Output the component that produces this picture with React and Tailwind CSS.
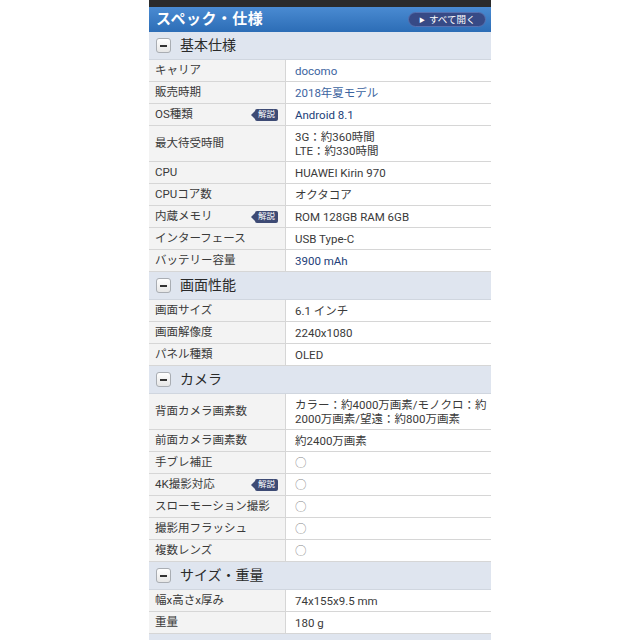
const sections = [
  {
    title: '基本仕様',
    rows: [
      { label: 'キャリア', value: 'docomo', tone: 'link' },
      { label: '販売時期', value: '2018年夏モデル', tone: 'link' },
      { label: 'OS種類', value: 'Android 8.1', tone: 'navy', badge: true },
      { label: '最大待受時間', value: ['3G：約360時間', 'LTE：約330時間'] },
      { label: 'CPU', value: 'HUAWEI Kirin 970' },
      { label: 'CPUコア数', value: 'オクタコア' },
      { label: '内蔵メモリ', value: 'ROM 128GB RAM 6GB', badge: true },
      { label: 'インターフェース', value: 'USB Type-C' },
      { label: 'バッテリー容量', value: '3900 mAh', tone: 'navy' },
    ],
  },
  {
    title: '画面性能',
    rows: [
      { label: '画面サイズ', value: '6.1 インチ' },
      { label: '画面解像度', value: '2240x1080' },
      { label: 'パネル種類', value: 'OLED' },
    ],
  },
  {
    title: 'カメラ',
    rows: [
      { label: '背面カメラ画素数', value: ['カラー：約4000万画素/モノクロ：約', '2000万画素/望遠：約800万画素'] },
      { label: '前面カメラ画素数', value: '約2400万画素' },
      { label: '手ブレ補正', value: '○', tone: 'mark' },
      { label: '4K撮影対応', value: '○', tone: 'mark', badge: true },
      { label: 'スローモーション撮影', value: '○', tone: 'mark' },
      { label: '撮影用フラッシュ', value: '○', tone: 'mark' },
      { label: '複数レンズ', value: '○', tone: 'mark' },
    ],
  },
  {
    title: 'サイズ・重量',
    rows: [
      { label: '幅x高さx厚み', value: '74x155x9.5 mm' },
      { label: '重量', value: '180 g' },
    ],
  },
];

const valueClass = (tone) => {
  switch (tone) {
    case 'link':
      return 'text-[#3c64a0]';
    case 'navy':
      return 'text-[#223e78]';
    case 'mark':
      return 'text-[#888]';
    default:
      return 'text-[#3a3a3a]';
  }
};

const Badge = () => (
  <span className="relative flex items-center h-[12px] px-[3px] ml-auto mr-[7px] rounded-[2px] bg-[#3d4a74] text-white text-[8.5px] leading-none">
    <span className="absolute left-[-4px] top-[2px] w-0 h-0 border-y-[4px] border-y-transparent border-r-[4px] border-r-[#3d4a74]"></span>
    解説
  </span>
);

const MinusIcon = () => (
  <span className="flex items-center justify-center w-[15px] h-[15px] rounded-[3px] border border-[#a9adb3] bg-gradient-to-b from-white to-[#e6e6e6]">
    <span className="block w-[7px] h-[2px] bg-[#333]"></span>
  </span>
);

const SpecRow = ({ row }) => {
  const multi = Array.isArray(row.value);
  return (
    <div className={`flex border-b border-[#d6d6d6] ${multi ? 'h-[36px]' : 'h-[22px]'}`}>
      <div className="flex items-center w-[137px] pl-[6px] bg-[#f3f3f3] border-r border-[#d6d6d6] text-[11.5px] text-[#3a3a3a]">
        <span>{row.label}</span>
        {row.badge && <Badge />}
      </div>
      <div className={`flex-1 flex flex-col justify-center pl-[9px] text-[11.5px] leading-[14px] bg-white ${valueClass(row.tone)}`}>
        {multi ? row.value.map((v) => <span key={v}>{v}</span>) : <span>{row.value}</span>}
      </div>
    </div>
  );
};

const App = () => {
  return (
    <div className="w-[640px] h-[640px] overflow-hidden bg-white" style={{ fontFamily: 'Roboto, "Noto Sans CJK JP", sans-serif' }}>
      <div className="w-[342px] ml-[149px]">
        <div className="h-[7px] bg-[#2b2b2b]"></div>
        <div className="flex items-center justify-between h-[25px] pl-[7px] pr-[5px] bg-gradient-to-b from-[#4a8bd2] to-[#2c6db6]">
          <span className="text-white font-bold text-[15px] tracking-[0.5px]">スペック・仕様</span>
          <span className="flex items-center gap-[4px] h-[15px] w-[78px] pl-[10px] rounded-full bg-[#374a86] border border-[#5670b0] text-white text-[9.5px] leading-none">
            <span className="text-[6px]">▶</span>
            すべて開く
          </span>
        </div>
        {sections.map((section) => (
          <div key={section.title}>
            <div className="flex items-center gap-[9px] h-[28px] pl-[7px] bg-[#dfe5ef] border-b border-[#d0d6df]">
              <MinusIcon />
              <span className="text-[14px] text-[#2a2a2a]">{section.title}</span>
            </div>
            {section.rows.map((row) => (
              <SpecRow key={row.label} row={row} />
            ))}
          </div>
        ))}
        <div className="h-[28px] bg-[#dfe5ef]"></div>
      </div>
    </div>
  );
};

export default App;
